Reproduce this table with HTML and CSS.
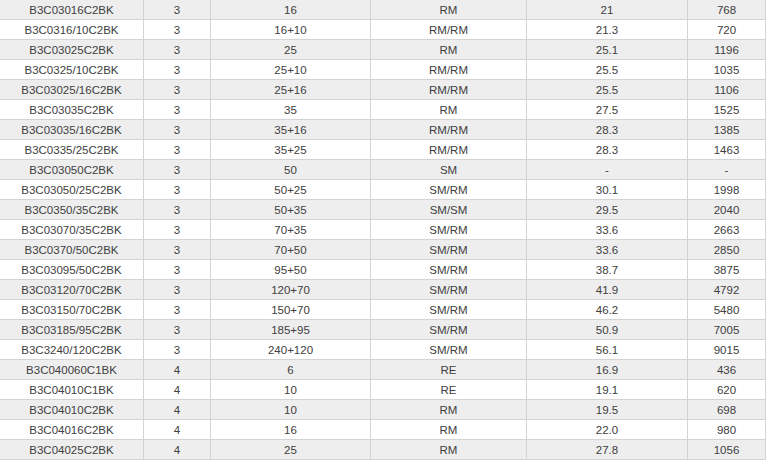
FILE: index.html
```html
<!DOCTYPE html>
<html>
<head>
<meta charset="utf-8">
<link rel="stylesheet" href="styles.css">
</head>
<body>
<table class="spec">
<colgroup>
<col class="c1"><col class="c2"><col class="c3"><col class="c4"><col class="c5"><col class="c6">
</colgroup>
<tbody>
<tr><td>B3C03016C2BK</td><td>3</td><td>16</td><td>RM</td><td>21</td><td>768</td></tr>
<tr><td>B3C0316/10C2BK</td><td>3</td><td>16+10</td><td>RM/RM</td><td>21.3</td><td>720</td></tr>
<tr><td>B3C03025C2BK</td><td>3</td><td>25</td><td>RM</td><td>25.1</td><td>1196</td></tr>
<tr><td>B3C0325/10C2BK</td><td>3</td><td>25+10</td><td>RM/RM</td><td>25.5</td><td>1035</td></tr>
<tr><td>B3C03025/16C2BK</td><td>3</td><td>25+16</td><td>RM/RM</td><td>25.5</td><td>1106</td></tr>
<tr><td>B3C03035C2BK</td><td>3</td><td>35</td><td>RM</td><td>27.5</td><td>1525</td></tr>
<tr><td>B3C03035/16C2BK</td><td>3</td><td>35+16</td><td>RM/RM</td><td>28.3</td><td>1385</td></tr>
<tr><td>B3C0335/25C2BK</td><td>3</td><td>35+25</td><td>RM/RM</td><td>28.3</td><td>1463</td></tr>
<tr><td>B3C03050C2BK</td><td>3</td><td>50</td><td>SM</td><td>-</td><td>-</td></tr>
<tr><td>B3C03050/25C2BK</td><td>3</td><td>50+25</td><td>SM/RM</td><td>30.1</td><td>1998</td></tr>
<tr><td>B3C0350/35C2BK</td><td>3</td><td>50+35</td><td>SM/SM</td><td>29.5</td><td>2040</td></tr>
<tr><td>B3C03070/35C2BK</td><td>3</td><td>70+35</td><td>SM/RM</td><td>33.6</td><td>2663</td></tr>
<tr><td>B3C0370/50C2BK</td><td>3</td><td>70+50</td><td>SM/RM</td><td>33.6</td><td>2850</td></tr>
<tr><td>B3C03095/50C2BK</td><td>3</td><td>95+50</td><td>SM/RM</td><td>38.7</td><td>3875</td></tr>
<tr><td>B3C03120/70C2BK</td><td>3</td><td>120+70</td><td>SM/RM</td><td>41.9</td><td>4792</td></tr>
<tr><td>B3C03150/70C2BK</td><td>3</td><td>150+70</td><td>SM/RM</td><td>46.2</td><td>5480</td></tr>
<tr><td>B3C03185/95C2BK</td><td>3</td><td>185+95</td><td>SM/RM</td><td>50.9</td><td>7005</td></tr>
<tr><td>B3C3240/120C2BK</td><td>3</td><td>240+120</td><td>SM/RM</td><td>56.1</td><td>9015</td></tr>
<tr><td>B3C040060C1BK</td><td>4</td><td>6</td><td>RE</td><td>16.9</td><td>436</td></tr>
<tr><td>B3C04010C1BK</td><td>4</td><td>10</td><td>RE</td><td>19.1</td><td>620</td></tr>
<tr><td>B3C04010C2BK</td><td>4</td><td>10</td><td>RM</td><td>19.5</td><td>698</td></tr>
<tr><td>B3C04016C2BK</td><td>4</td><td>16</td><td>RM</td><td>22.0</td><td>980</td></tr>
<tr><td>B3C04025C2BK</td><td>4</td><td>25</td><td>RM</td><td>27.8</td><td>1056</td></tr>
</tbody>
</table>
</body>
</html>
```
FILE: styles.css
```css
html, body {
  margin: 0;
  padding: 0;
  background: #ffffff;
}
.spec {
  border-collapse: collapse;
  table-layout: fixed;
  width: 766px;
  margin-left: -1px;
  font-family: "Liberation Sans", Arial, sans-serif;
  font-size: 11.5px;
  color: #404040;
}
.spec .c1 { width: 144px; }
.spec .c2 { width: 67px; }
.spec .c3 { width: 160px; }
.spec .c4 { width: 156px; }
.spec .c5 { width: 161px; }
.spec .c6 { width: 78px; }
.spec td {
  height: 18px;
  padding: 1px 0 0;
  text-align: center;
  vertical-align: middle;
  border: 1px solid #d4d4d4;
  line-height: 18px;
}
.spec tr:nth-child(odd) td {
  background: #eeeeee;
}
.spec tr:first-child td {
  border-top: none;
}
```
